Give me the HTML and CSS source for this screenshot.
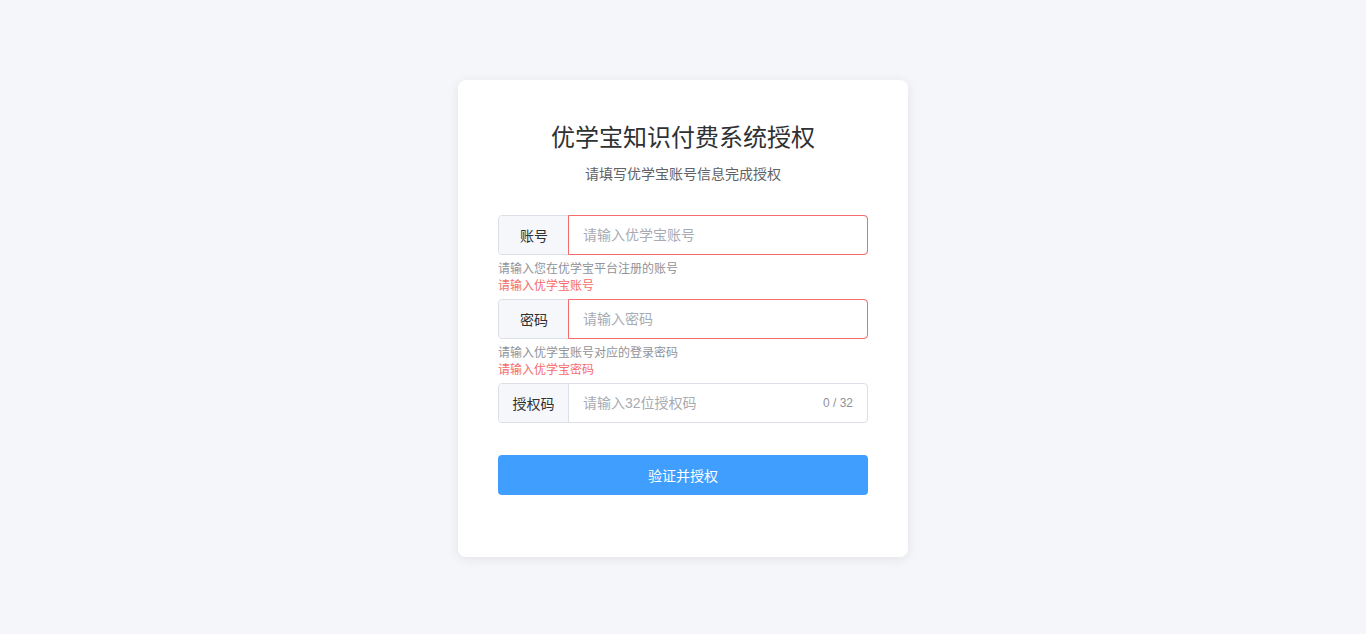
FILE: index.html
```html
<!DOCTYPE html>
<html lang="zh-CN">
<head>
<meta charset="utf-8">
<title>优学宝知识付费系统授权</title>
<link rel="stylesheet" href="styles.css">
</head>
<body>
<div class="page">
  <div class="card">
    <h1 class="title">优学宝知识付费系统授权</h1>
    <p class="subtitle">请填写优学宝账号信息完成授权</p>
    <form class="form">
      <div class="field">
        <div class="group is-error">
          <span class="prepend">账号</span>
          <input class="input" type="text" placeholder="请输入优学宝账号">
        </div>
        <div class="help">请输入您在优学宝平台注册的账号</div>
        <div class="error">请输入优学宝账号</div>
      </div>
      <div class="field">
        <div class="group is-error">
          <span class="prepend">密码</span>
          <input class="input" type="password" placeholder="请输入密码">
        </div>
        <div class="help">请输入优学宝账号对应的登录密码</div>
        <div class="error">请输入优学宝密码</div>
      </div>
      <div class="field">
        <div class="group">
          <span class="prepend">授权码</span>
          <input class="input" type="text" placeholder="请输入32位授权码">
          <span class="count">0 / 32</span>
        </div>
      </div>
      <button class="submit" type="button">验证并授权</button>
    </form>
  </div>
</div>
</body>
</html>
```
FILE: styles.css
```css
* { box-sizing: border-box; }
html, body { margin: 0; padding: 0; }
body {
  background: #f5f6fa;
  font-family: "Helvetica Neue", "Liberation Sans", "Noto Sans CJK SC", sans-serif;
  color: #303133;
}
.page {
  display: flex;
  justify-content: center;
  padding-top: 80px;
  height: 634px;
}
.card {
  width: 450px;
  height: 477px;
  background: #fff;
  border-radius: 8px;
  box-shadow: 0 2px 12px rgba(0, 0, 0, 0.08);
  padding: 40px 40px 40px;
  display: flex;
  flex-direction: column;
}
.title {
  margin: 0;
  font-size: 24px;
  line-height: 36px;
  font-weight: 400;
  text-align: center;
  color: #303133;
}
.subtitle {
  margin: 8px 0 0;
  font-size: 14px;
  line-height: 21px;
  text-align: center;
  color: #606266;
}
.form {
  margin-top: 30px;
  display: flex;
  flex-direction: column;
}
.field { margin-bottom: 4px; }
.field:last-of-type { margin-bottom: 0; }
.group {
  display: flex;
  height: 40px;
  border: 1px solid #dcdfe6;
  border-radius: 4px;
  background: #fff;
  position: relative;
}
.prepend {
  width: 70px;
  flex: none;
  display: flex;
  align-items: center;
  justify-content: center;
  background: #f5f7fa;
  border-right: 1px solid #dcdfe6;
  border-radius: 4px 0 0 4px;
  font-size: 14px;
  color: #303133;
}
.group.is-error .input {
  border: 1px solid #f56c6c;
  margin: -1px;
  border-radius: 0 4px 4px 0;
}
.group.is-error .prepend { border-right: none; }
.input {
  flex: 1;
  min-width: 0;
  border: none;
  outline: none;
  padding: 0 14px;
  font-size: 14px;
  font-family: inherit;
  color: #606266;
  background: transparent;
}
.input::placeholder { color: #a8abb2; }
.count {
  display: flex;
  align-items: center;
  padding-right: 14px;
  font-size: 12px;
  color: #909399;
}
.help, .error {
  font-size: 12px;
  line-height: 17px;
}
.help { padding-top: 6px; color: #909399; }
.error { color: #f56c6c; }
.submit {
  margin-top: 32px;
  height: 40px;
  border: none;
  border-radius: 4px;
  background: #409eff;
  color: #fff;
  font-size: 14px;
  font-family: inherit;
  cursor: pointer;
}
```
